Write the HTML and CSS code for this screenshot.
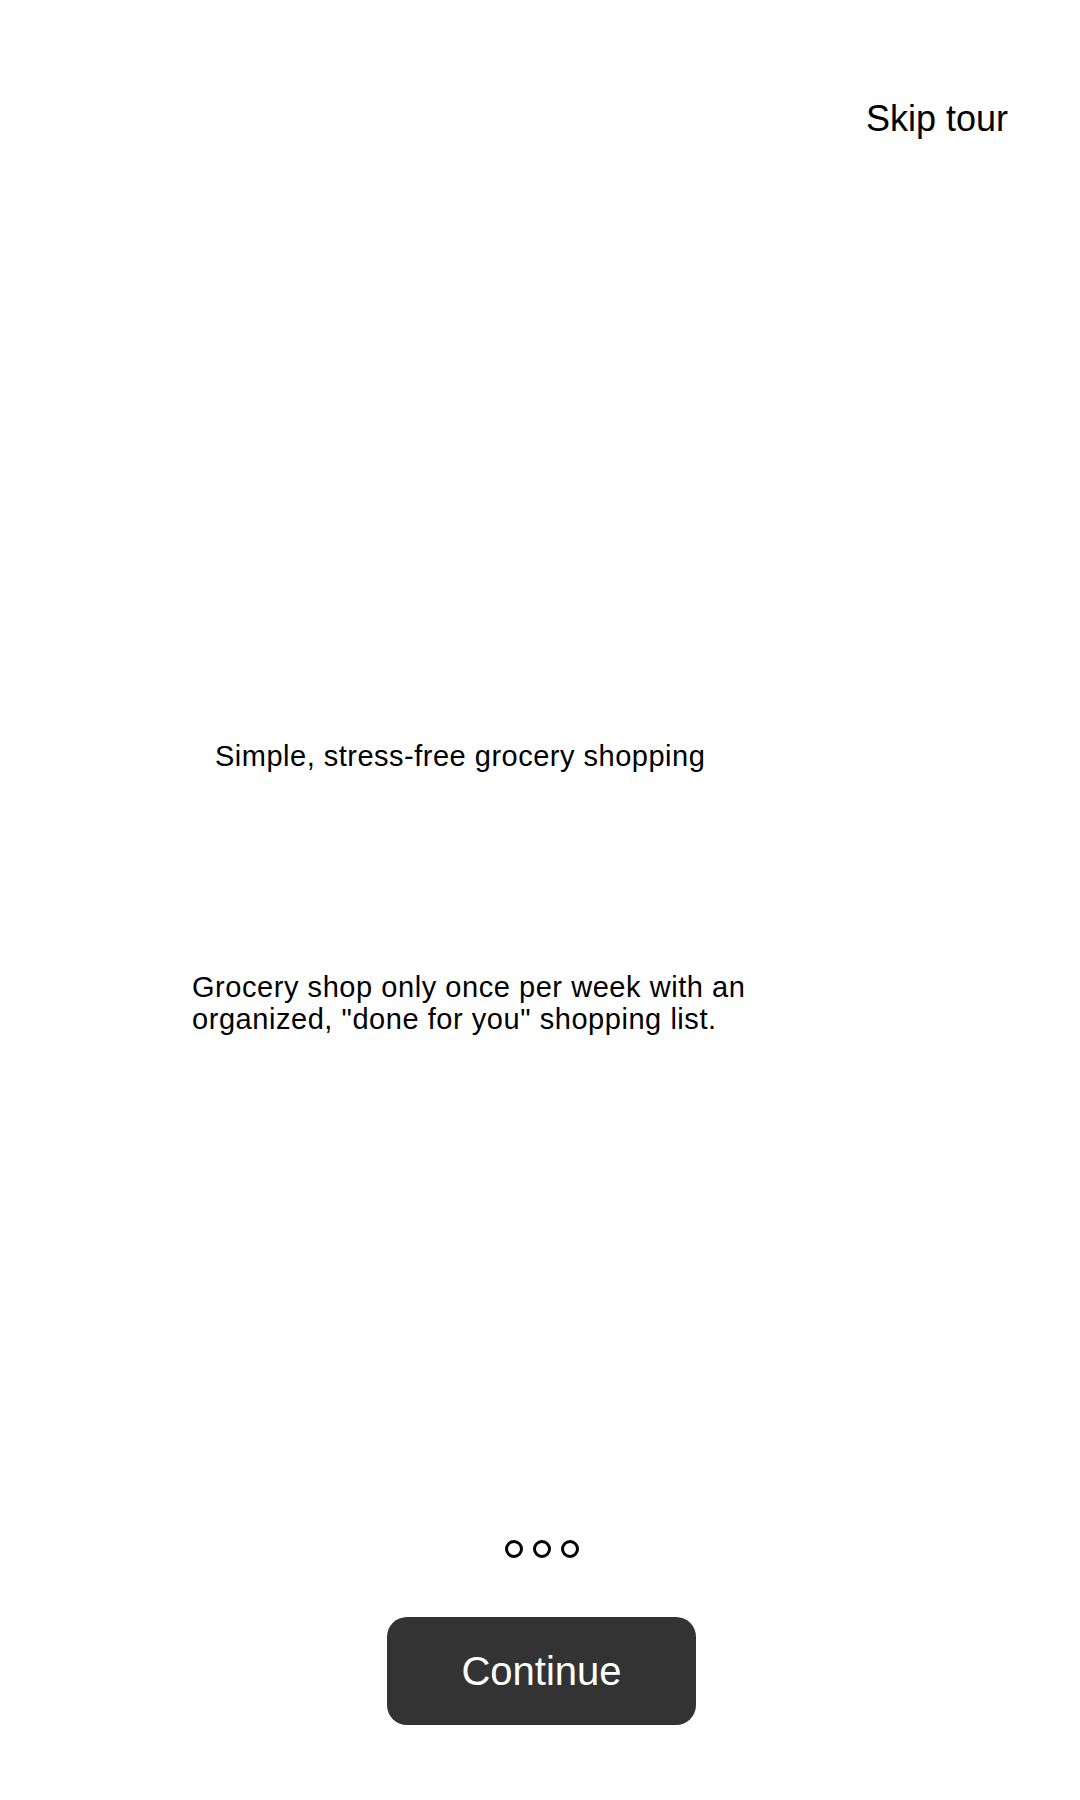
FILE: index.html
```html
<!DOCTYPE html>
<html lang="en">
<head>
<meta charset="utf-8">
<title>Tour</title>
<link rel="stylesheet" href="styles.css">
</head>
<body>
<main class="tour">
  <header class="tour-header">
    <a class="skip" href="#">Skip tour</a>
  </header>
  <h1 class="title">Simple, stress-free grocery shopping</h1>
  <p class="desc">Grocery shop only once per week with an organized, "done for you" shopping list.</p>
  <div class="dots">
    <span class="dot"></span>
    <span class="dot"></span>
    <span class="dot"></span>
  </div>
  <div class="actions">
    <button class="continue" type="button">Continue</button>
  </div>
</main>
</body>
</html>
```

FILE: styles.css
```css
* { box-sizing: border-box; }
html, body {
  margin: 0;
  padding: 0;
  background: #fff;
}
body {
  font-family: "Liberation Sans", Arial, sans-serif;
  color: #000;
  width: 1080px;
  height: 1800px;
}
.tour {
  display: flex;
  flex-direction: column;
}
.tour-header {
  display: flex;
  justify-content: flex-end;
  padding: 99px 72px 0 0;
}
.skip {
  font-size: 36px;
  line-height: 40px;
  color: #000;
  text-decoration: none;
}
.title {
  margin: 601px 0 0 215px;
  font-size: 29px;
  letter-spacing: 0.5px;
  line-height: 32px;
  font-weight: normal;
}
.desc {
  margin: 199px 0 0 192px;
  width: 580px;
  font-size: 29px;
  letter-spacing: 0.55px;
  line-height: 32px;
}
.dots {
  margin-top: 505px;
  display: flex;
  justify-content: center;
  gap: 10px;
  padding-left: 3px;
}
.dot {
  width: 18px;
  height: 18px;
  border: 3px solid #000;
  border-radius: 50%;
}
.actions {
  margin-top: 59px;
  display: flex;
  justify-content: center;
}
.continue {
  width: 309px;
  height: 108px;
  margin-left: 3px;
  border: none;
  border-radius: 20px;
  background: #333;
  color: #fff;
  font-family: "Liberation Sans", Arial, sans-serif;
  font-size: 40px;
  padding: 0;
}
```
